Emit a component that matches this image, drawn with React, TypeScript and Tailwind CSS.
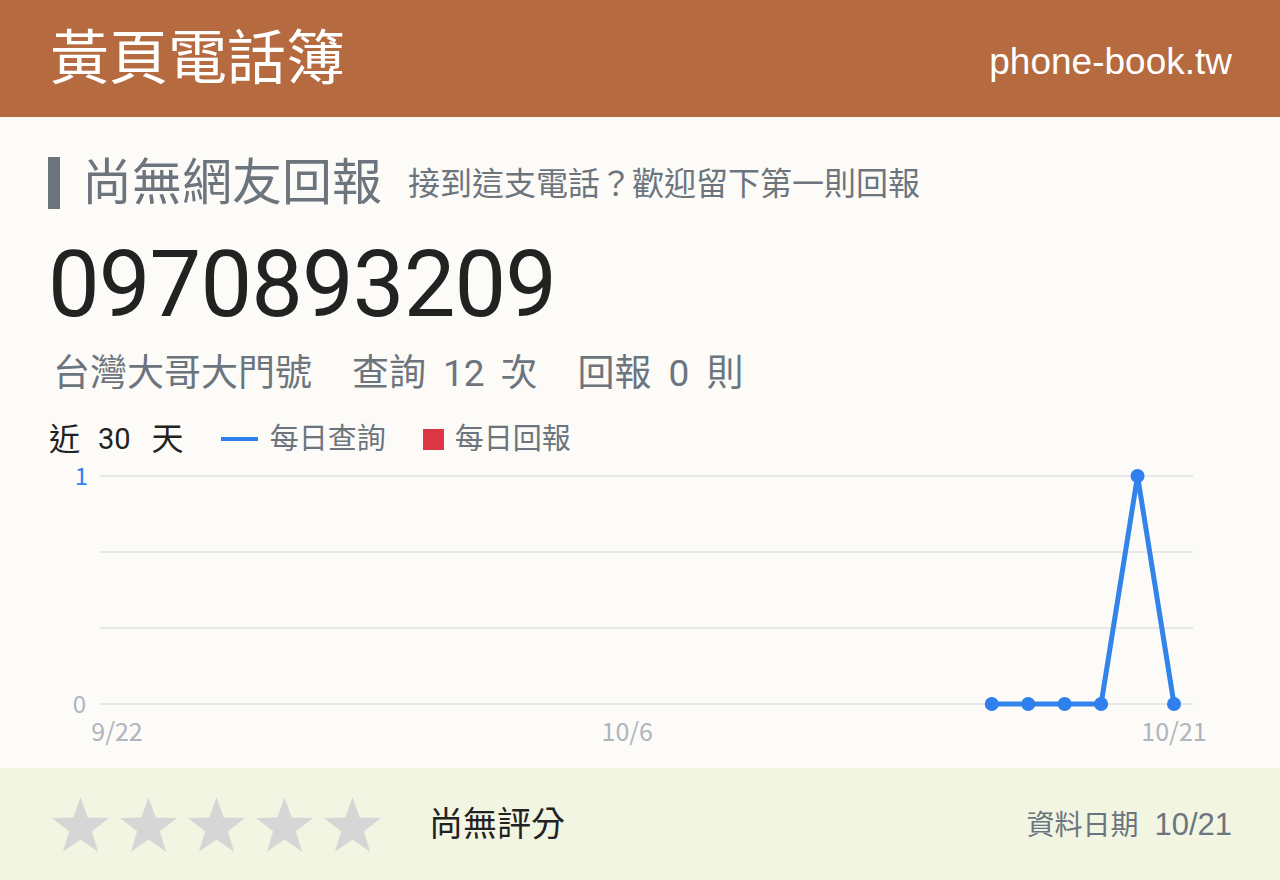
import React from "react";

const CJK = "font-['Roboto','Noto_Sans_CJK_TC',sans-serif]";

// last 30 days of lookups; only the tail has data
const days = 30;
const series: { day: number; value: number }[] = [
  { day: 24, value: 0 },
  { day: 25, value: 0 },
  { day: 26, value: 0 },
  { day: 27, value: 0 },
  { day: 28, value: 1 },
  { day: 29, value: 0 },
];

const chart = {
  left: 52,
  right: 1145,
  top: 26,
  bottom: 254,
  firstX: 69,
  lastX: 1126,
};

function xOf(day: number) {
  return chart.firstX + (day * (chart.lastX - chart.firstX)) / (days - 1);
}

function yOf(value: number) {
  return chart.bottom - value * (chart.bottom - chart.top);
}

function LookupChart() {
  const grid = [0, 1, 2, 3].map((i) => chart.top + (i * (chart.bottom - chart.top)) / 3);
  const points = series.map((p) => `${xOf(p.day)},${yOf(p.value)}`).join(" ");
  return (
    <svg width="1184" height="310" viewBox="0 0 1184 310" className="block">
      {grid.map((y) => (
        <line key={y} x1={chart.left} x2={chart.right} y1={y} y2={y} stroke="#e6e8ec" strokeWidth="2" />
      ))}
      <g fontFamily="'Noto Sans CJK TC', sans-serif" fontSize="24">
        <text x="40" y={chart.top + 9} textAnchor="end" fill="#2f80ed">
          1
        </text>
        <text x="38" y={chart.bottom + 9} textAnchor="end" fill="#adb5bd">
          0
        </text>
        <text x={xOf(0)} y="291" textAnchor="middle" fill="#adb5bd" fontSize="25">
          9/22
        </text>
        <text x={xOf(14)} y="291" textAnchor="middle" fill="#adb5bd" fontSize="25">
          10/6
        </text>
        <text x={xOf(29)} y="291" textAnchor="middle" fill="#adb5bd" fontSize="25">
          10/21
        </text>
      </g>
      <polyline points={points} fill="none" stroke="#3283ea" strokeWidth="5" strokeLinejoin="round" />
      {series.map((p) => (
        <circle key={p.day} cx={xOf(p.day)} cy={yOf(p.value)} r="7" fill="#2f80ed" />
      ))}
    </svg>
  );
}

function Star() {
  return (
    <svg width="57" height="55" viewBox="0 0 24 23">
      <polygon points="12,0 15,8.6 24,8.8 16.8,14.3 19.4,23 12,17.8 4.6,23 7.2,14.3 0,8.8 9,8.6" fill="#d6d6d6" />
    </svg>
  );
}

export default function App() {
  return (
    <div className={`w-[1280px] h-[880px] flex flex-col bg-[#fcfbf8] ${CJK}`}>
      <header className="h-[117px] shrink-0 flex items-center justify-between bg-[#b56a40] pl-[50px] pr-[48px]">
        <h1 className="m-0 text-[59px] leading-none font-normal text-white">黃頁電話簿</h1>
        <span className="mt-[5px] text-[37px] leading-none text-white font-['Liberation_Sans',Arial,sans-serif]">
          phone-book.tw
        </span>
      </header>

      <main className="flex-1 flex flex-col px-12 pt-[40px]">
        <div className="h-[52px] flex items-center">
          <span className="w-3 h-[52px] bg-[#6c757d]" />
          <h2 className="m-0 ml-[22px] text-[50px] leading-none font-normal text-[#6c757d]">尚無網友回報</h2>
          <p className="m-0 ml-[26px] mt-[2px] text-[32px] leading-none text-[#6c757d]">
            接到這支電話？歡迎留下第一則回報
          </p>
        </div>

        <div className="mt-[30px] text-[92px] leading-none tracking-[-0.9px] text-[#222] font-['Roboto',sans-serif]">
          0970893209
        </div>

        <div className="mt-[24px] ml-[5px] flex items-center text-[37px] leading-none text-[#6c757d]">
          <span>台灣大哥大門號</span>
          <span className="ml-[40px]">查詢</span>
          <span className="ml-[17px]">12</span>
          <span className="ml-[16px]">次</span>
          <span className="ml-[40px]">回報</span>
          <span className="ml-[17px]">0</span>
          <span className="ml-[17px]">則</span>
        </div>

        <div className="mt-[31px] ml-[1px] h-[32px] flex items-center">
          <span className="text-[31px] leading-none text-[#222]">近</span>
          <span className="ml-[18px] text-[29px] leading-none text-[#222]">30</span>
          <span className="ml-[21px] text-[32px] leading-none text-[#222]">天</span>
          <span className="ml-[37px] w-[37px] h-[4px] bg-[#2f80ed]" />
          <span className="ml-[12px] text-[29px] leading-none text-[#6c757d]">每日查詢</span>
          <span className="ml-[37px] w-[21px] h-[21px] bg-[#dc3545]" />
          <span className="ml-[11px] text-[29px] leading-none text-[#6c757d]">每日回報</span>
        </div>

        <div className="mt-[-5px]">
          <LookupChart />
        </div>
      </main>

      <footer className="h-[112px] shrink-0 flex items-center justify-between bg-[#f2f5e2] pl-[52px] pr-[48px]">
        <div className="flex items-center">
          <div className="flex gap-[11px]">
            {[0, 1, 2, 3, 4].map((i) => (
              <Star key={i} />
            ))}
          </div>
          <span className="ml-[48px] text-[34px] leading-none text-[#222]">尚無評分</span>
        </div>
        <div className="flex items-baseline text-[#6c757d]">
          <span className="text-[28px] leading-none">資料日期</span>
          <span className="ml-[16px] text-[31px] leading-none font-['Liberation_Sans',Arial,sans-serif]">10/21</span>
        </div>
      </footer>
    </div>
  );
}
